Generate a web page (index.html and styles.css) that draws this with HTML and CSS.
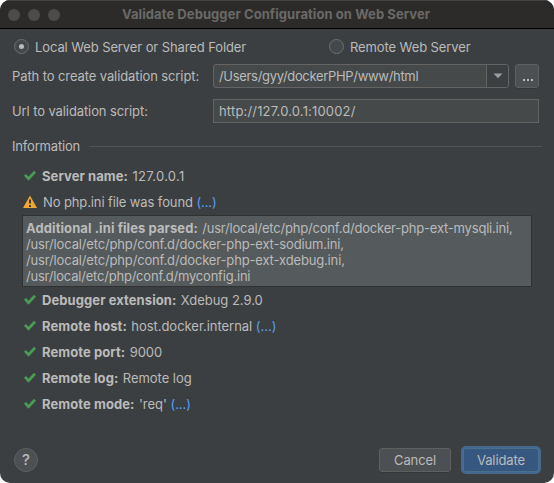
FILE: index.html
```html
<!DOCTYPE html>
<html lang="en">
<head>
<meta charset="utf-8">
<title>Validate Debugger Configuration on Web Server</title>
<link rel="stylesheet" href="styles.css">
</head>
<body>
<svg width="0" height="0" class="defs"><defs>
<symbol id="check" viewBox="0 0 16 16"><path d="M3 6.9 6.5 10.6 13 3.8" fill="none" stroke="#499c54" stroke-width="2.8"/></symbol>
</defs></svg>
<main class="dialog">
  <header class="titlebar">
    <div class="lights"><i></i><i></i><i></i></div>
    <h1>Validate Debugger Configuration on Web Server</h1>
  </header>
  <div class="radios">
    <label class="radio local"><span class="dot on"></span><span>Local Web Server or Shared Folder</span></label>
    <label class="radio"><span class="dot"></span><span>Remote Web Server</span></label>
  </div>
  <div class="field">
    <span class="label">Path to create validation script:</span>
    <div class="combo"><span class="value">/Users/gyy/dockerPHP/www/html</span><span class="arrow"><svg width="10" height="6" viewBox="0 0 10 6"><path d="M.5.5h9L5 5.3z" fill="#9a9da0"/></svg></span></div>
    <button class="browse"><i></i><i></i><i></i></button>
  </div>
  <div class="field url">
    <span class="label">Url to validation script:</span>
    <div class="input">http://127.0.0.1:10002/</div>
  </div>
  <div class="section"><span>Information</span><hr></div>
  <section class="results">
    <div class="row"><svg class="icon"><use href="#check"/></svg><p><b>Server name:</b> <span class="address">127.0.0.1</span></p></div>
    <div class="row warn"><svg class="icon" viewBox="0 0 16 16"><path d="M8 1.5 15 14H1z" fill="#f0a732"/><path d="M7 5.5h2v4H7zM7 11h2v2H7z" fill="#3c3f41"/></svg><p>No php.ini file was found <a>(...)</a></p></div>
    <div class="parsed">
      <div><b>Additional .ini files parsed:</b> <span class="first">/usr/local/etc/php/conf.d/docker-php-ext-mysqli.ini,</span></div>
      <div>/usr/local/etc/php/conf.d/docker-php-ext-sodium.ini,</div>
      <div>/usr/local/etc/php/conf.d/docker-php-ext-xdebug.ini,</div>
      <div class="last">/usr/local/etc/php/conf.d/myconfig.ini</div>
    </div>
    <div class="row"><svg class="icon"><use href="#check"/></svg><p><b>Debugger extension:</b> Xdebug 2.9.0</p></div>
    <div class="row"><svg class="icon"><use href="#check"/></svg><p><b>Remote host:</b> host.docker.internal <a>(...)</a></p></div>
    <div class="row"><svg class="icon"><use href="#check"/></svg><p><b>Remote port:</b> 9000</p></div>
    <div class="row"><svg class="icon"><use href="#check"/></svg><p><b>Remote log:</b> Remote log</p></div>
    <div class="row"><svg class="icon"><use href="#check"/></svg><p><b>Remote mode:</b> 'req' <a>(...)</a></p></div>
  </section>
  <footer class="footer">
    <button class="help">?</button>
    <button class="btn">Cancel</button>
    <button class="btn primary">Validate</button>
  </footer>
</main>
</body>
</html>
```

FILE: styles.css
```css
* { box-sizing: border-box; }
body { margin: 0; background: #fff; font: 13px/16px Inter, "Liberation Sans", sans-serif; color: #bbb; letter-spacing: -0.1px; }
.defs { display: block; position: absolute; }
.dialog { width: 554px; height: 483px; background: #3c3f41; border-radius: 10px; overflow: hidden; display: flex; flex-direction: column; white-space: nowrap; }
.titlebar { height: 29px; flex: none; background: #2c2b29; border-top: 1px solid #454442; border-bottom: 1px solid #000; display: grid; grid-template-columns: 122px 1fr; align-items: center; }
.lights { display: flex; gap: 8px; padding-left: 8px; }
.lights i { width: 12px; height: 12px; border-radius: 50%; background: #4d4b49; }
h1 { margin: 0; padding-bottom: 1px; font-size: 13px; font-weight: 700; color: #6a6968; letter-spacing: 0.07px; }
.radios { display: flex; height: 35px; padding-left: 14px; flex: none; }
.radio { display: flex; align-items: center; gap: 6px; height: 35px; }
.local { width: 315px; }
.dot { width: 15px; height: 15px; border: 1px solid #6b6f70; border-radius: 50%; background: #43494a; display: grid; place-items: center; }
.dot.on::after { content: ""; width: 5px; height: 5px; border-radius: 50%; background: #bbb; }
.field { display: flex; align-items: center; height: 24px; padding: 0 15px 0 12px; flex: none; }
.label { width: 201px; }
.combo { width: 296px; height: 24px; display: flex; border: 1px solid #646464; border-radius: 3px; background: #45494a; }
.value { flex: 1; padding: 3px 0 0 5px; letter-spacing: -0.32px; }
.arrow { width: 22px; border-left: 1px solid #646464; background: #3c3f41; display: grid; place-items: center; border-radius: 0 2px 2px 0; }
button { font: inherit; letter-spacing: inherit; color: #bbb; padding: 0; margin: 0; }
.browse { width: 24px; height: 24px; margin-left: 6px; border: 1px solid #5e6060; border-radius: 3px; background: #4c5052; box-shadow: 0 1px #353739; display: flex; justify-content: center; align-items: flex-end; gap: 2px; padding: 0 0 6px 1px; }
.browse i { width: 2px; height: 2px; background: #bbb; }
.url { margin-top: 11px; }
.input { width: 326px; height: 24px; border: 1px solid #646464; background: #45494a; padding: 3px 5px; letter-spacing: 0.17px; }
.section { display: flex; align-items: center; gap: 9px; height: 16px; margin-top: 15px; padding: 0 12px; flex: none; letter-spacing: -0.18px; }
hr { flex: 1; margin: 0; border: 0; height: 1px; background: #565452; }
.results { padding: 9px 22px 0; }
.results b { letter-spacing: 0.08px; margin-right: 0.8px; }
.row { display: flex; align-items: center; height: 26px; letter-spacing: -0.03px; }
.icon { width: 16px; height: 16px; margin-right: 4px; flex: none; }
.row p { margin: 0; }
.warn { letter-spacing: -0.11px; }
.warn .icon { margin-right: 5px; }
.address { letter-spacing: 0.3px; }
.parsed { height: 72px; border: 1px solid #2f3132; background: #555a5c; padding: 4px 3px; letter-spacing: -0.155px; }
.first { letter-spacing: -0.2px; }
.last { letter-spacing: -0.21px; }
.parsed div { height: 16px; }
a { color: #589df6; }
.footer { display: flex; align-items: center; margin-top: auto; padding: 0 14px 9px; height: 37px; }
.help { width: 24px; height: 24px; border-radius: 50%; border: 1px solid #5e6060; background: #4c5052; font-size: 15px; font-weight: 500; margin-right: auto; }
.btn { width: 72px; height: 24px; border: 1px solid #5e6060; border-radius: 3px; background: #4c5052; box-shadow: 0 1px #353739; }
.primary { width: 76px; border-color: #4c708c; background: #365880; box-shadow: 0 0 0 2px #43698e; margin: 0 1px 0 12px; }
```
